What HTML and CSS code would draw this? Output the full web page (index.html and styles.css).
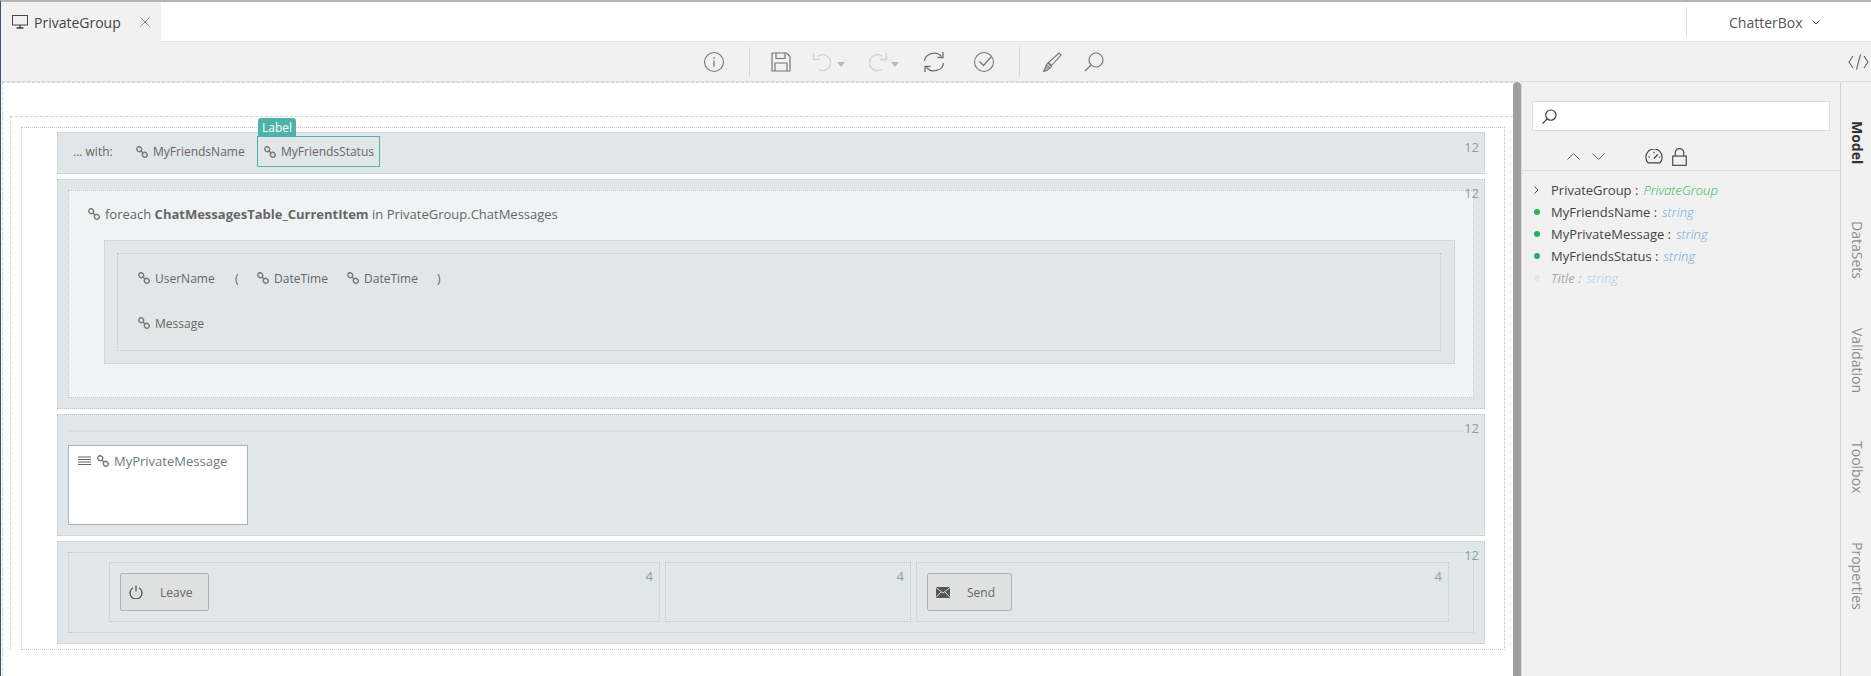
FILE: index.html
```html
<!DOCTYPE html>
<html lang="en">
<head>
<meta charset="utf-8">
<title>PrivateGroup</title>
<link rel="stylesheet" href="styles.css">
</head>
<body>
<svg class="defs" width="0" height="0">
  <defs>
    <symbol id="link" viewBox="0 0 12 12">
      <g fill="none" stroke="#7a7a7a" stroke-width="1.4">
        <ellipse cx="3.2" cy="3.2" rx="2.5" ry="2.3" transform="rotate(45 3.2 3.2)"/>
        <ellipse cx="8.8" cy="8.8" rx="2.5" ry="2.3" transform="rotate(45 8.8 8.8)"/>
        <path d="M5 5l2 2"/>
      </g>
    </symbol>
  </defs>
</svg>
<div class="app">
  <header class="tabbar">
    <div class="tab">
      <svg class="tab-icon" viewBox="0 0 16 14" fill="none" stroke="#444" stroke-width="1"><rect x="0.5" y="0.5" width="15" height="9.5"/><path d="M8 10v2.5M4.5 13h7" stroke-width="1.4"/></svg>
      <span class="tab-title">PrivateGroup</span>
      <svg class="tab-close" viewBox="0 0 10 10" fill="none" stroke="#8a8a8a" stroke-width="1"><path d="M0.5 0.5l9 9M9.5 0.5l-9 9"/></svg>
    </div>
    <div class="project">
      <span>ChatterBox</span>
      <svg class="project-caret" viewBox="0 0 8 5" fill="none" stroke="#555" stroke-width="1"><path d="M0.5 0.5l3.5 3.5 3.5-3.5"/></svg>
    </div>
  </header>

  <nav class="toolbar">
    <svg class="tool t-info" viewBox="0 0 22 22" fill="none" stroke="#777" stroke-width="1.1"><circle cx="11" cy="11" r="9.500"/><path d="M11 9.500v6" stroke-width="1.3"/><path d="M11 6.200v1.600" stroke-width="1.3"/></svg>
    <i class="tool-sep s-1"></i>
    <svg class="tool t-save" viewBox="0 0 20 20" fill="none" stroke="#777" stroke-width="1.2"><path d="M1 1h14.500l3.500 3.500v14.500h-18z"/><path d="M5 1v5.500h9v-5.500M4 19v-8h12v8"/></svg>
    <svg class="tool t-undo" viewBox="0 0 22 22" fill="none" stroke="#d2d2d2" stroke-width="1.3"><path d="M5.500 5.500a8 8 0 1 1 1 13"/><path d="M1.500 2v6.500h6.500"/></svg>
    <i class="caret"></i>
    <svg class="tool t-redo" viewBox="0 0 22 22" fill="none" stroke="#d2d2d2" stroke-width="1.3"><path d="M16.500 5.500a8 8 0 1 0 -1 13"/><path d="M20.500 2v6.500h-6.500"/></svg>
    <i class="caret"></i>
    <svg class="tool t-sync" viewBox="0 0 22 22" fill="none" stroke="#707070" stroke-width="1.3"><path d="M1.500 10a9.500 8.500 0 0 1 17-4.500"/><path d="M20 1v5.500h-5.500"/><path d="M20.500 12a9.500 8.500 0 0 1 -17 4.500"/><path d="M2 21v-5.500h5.500"/></svg>
    <svg class="tool t-check" viewBox="0 0 22 22" fill="none" stroke="#777" stroke-width="1.1"><circle cx="11" cy="11" r="9.500"/><path d="M6.500 10.500l4 4 8-9" stroke-width="1.3"/></svg>
    <i class="tool-sep s-2"></i>
    <svg class="tool t-brush" viewBox="0 0 20 20" fill="none" stroke="#777" stroke-width="1.1"><path d="M17 1l2 2-9.500 10.500-3-3z"/><path d="M6 11l3.500 3.500-1.500 1.500-3.500-3.500z"/><path d="M4.500 12.500c-.5 2-1.500 4-3 7 2.500-.5 5-1.500 6.500-3.500" fill="#aaa"/></svg>
    <svg class="tool t-search" viewBox="0 0 20 20" fill="none" stroke="#777" stroke-width="1.2"><circle cx="12" cy="8" r="7"/><path d="M7 13l-6 6"/></svg>
    <svg class="tool-code" viewBox="0 0 21 16" fill="none" stroke="#666" stroke-width="1.1"><path d="M5 2l-4 6 4 6M16 2l4 6-4 6M12.500 0.500l-4 15"/></svg>
  </nav>

  <main class="workspace">
    <section class="canvas">
      <div class="frame-a">
        <div class="frame-b">
          <div class="frame-c">
            <div class="row row-head">
              <span class="num">12</span>
              <span class="with">... with:</span>
              <span class="bind b-name"><svg class="lnk"><use href="#link"/></svg>MyFriendsName</span>
              <span class="bind b-sel">
                <span class="tag">Label</span>
                <svg class="lnk"><use href="#link"/></svg>MyFriendsStatus
              </span>
            </div>

            <div class="row row-loop">
              <span class="num">12</span>
              <div class="loop">
                <div class="loop-title"><svg class="lnk"><use href="#link"/></svg><span>foreach <b>ChatMessagesTable_CurrentItem</b> in PrivateGroup.ChatMessages</span></div>
                <div class="nest">
                  <div class="nest-in">
                    <div class="msg-line">
                      <span class="bind w-user"><svg class="lnk"><use href="#link"/></svg>UserName</span>
                      <span class="paren-l">(</span>
                      <span class="bind w-date"><svg class="lnk"><use href="#link"/></svg>DateTime</span>
                      <span class="bind w-date"><svg class="lnk"><use href="#link"/></svg>DateTime</span>
                      <span>)</span>
                    </div>
                    <div class="msg-line line-2">
                      <span class="bind"><svg class="lnk"><use href="#link"/></svg>Message</span>
                    </div>
                  </div>
                </div>
              </div>
            </div>

            <div class="row row-input">
              <span class="num">12</span>
              <div class="rule"></div>
              <div class="textarea">
                <svg class="lines" viewBox="0 0 13 10"><path d="M0 1h13M0 3.500h13M0 6h13M0 8.500h13" stroke="#666" stroke-width="1.2"/></svg>
                <svg class="lnk"><use href="#link"/></svg>
                <span>MyPrivateMessage</span>
              </div>
            </div>

            <div class="row row-actions">
              <span class="num">12</span>
              <div class="actions">
                <div class="col col-1">
                  <span class="num n4">4</span>
                  <button class="btn btn-leave">
                    <svg class="btn-icon" viewBox="0 0 14 14" fill="none" stroke="#555" stroke-width="1.3"><path d="M4 2.800a6 6 0 1 0 6 0"/><path d="M7 0.500v6"/></svg>
                    <span>Leave</span>
                  </button>
                </div>
                <div class="col col-2"><span class="num n4">4</span></div>
                <div class="col col-3">
                  <span class="num n4">4</span>
                  <button class="btn btn-send">
                    <svg class="btn-icon mail" viewBox="0 0 14 11"><rect width="14" height="11" fill="#555"/><path d="M0 .5l7 5.500 7-5.500M0 10.500l5-5.500M14 10.500l-5-5.500" stroke="#e6eaec" fill="none" stroke-width="0.9"/></svg>
                    <span>Send</span>
                  </button>
                </div>
              </div>
            </div>
          </div>
        </div>
      </div>
    </section>
    <div class="scrollbar"></div>

    <aside class="panel">
      <div class="search">
        <svg class="search-icon" viewBox="0 0 16 16" fill="none" stroke="#333" stroke-width="1.2"><circle cx="9.500" cy="6.500" r="5.500"/><path d="M5.500 10.500l-5 5"/></svg>
      </div>
      <div class="panel-tools">
        <svg class="pt-up" viewBox="0 0 13 7" fill="none" stroke="#666"><path d="M0.500 6.500l6-6 6 6"/></svg>
        <svg class="pt-down" viewBox="0 0 13 7" fill="none" stroke="#666"><path d="M0.500 0.500l6 6 6-6"/></svg>
        <svg class="pt-gauge" viewBox="0 0 17 14" fill="none" stroke="#444" stroke-width="1.1"><path d="M3 13a7.700 7.700 0 1 1 11 0z"/><path d="M8.500 9l3.500-4" stroke-width="1.4"/><path d="M3 7.500h1.500M8.500 2.500v1.500M13 7.500h1.500"/></svg>
        <svg class="pt-lock" viewBox="0 0 14 17" fill="none" stroke="#555" stroke-width="1.2"><rect x="0.600" y="7.600" width="12.800" height="8.800"/><path d="M3 7.500v-3a4 4 0 0 1 8 0v3"/></svg>
      </div>
      <ul class="tree">
        <li><svg class="tree-caret" viewBox="0 0 5 8" fill="none" stroke="#555"><path d="M0.500 0.500l3.500 3.500-3.500 3.500"/></svg><span class="tname">PrivateGroup :</span><em class="tgreen">PrivateGroup</em></li>
        <li><i class="dot"></i><span class="tname">MyFriendsName :</span><em>string</em></li>
        <li><i class="dot"></i><span class="tname">MyPrivateMessage :</span><em>string</em></li>
        <li><i class="dot"></i><span class="tname">MyFriendsStatus :</span><em>string</em></li>
        <li class="muted"><i class="dot"></i><span class="tname">Title :</span><em>string</em></li>
      </ul>
    </aside>

    <div class="sidetabs">
      <span class="stab active s-model">Model</span>
      <span class="stab s-data">DataSets</span>
      <span class="stab s-valid">Validation</span>
      <span class="stab s-tool">Toolbox</span>
      <span class="stab s-prop">Properties</span>
    </div>
  </main>
</div>
</body>
</html>
```
FILE: styles.css
```css
* { box-sizing: border-box; }
html, body { margin: 0; padding: 0; height: 100%; background: #fff; overflow: hidden; }
body { font-family: "Open Sans", "Liberation Sans", sans-serif; font-size: 12px; color: #666; }
.defs { position: absolute; }
svg { display: block; flex: none; }

.app { width: 1871px; height: 676px; display: flex; flex-direction: column; border-top: 2px solid #b4b4b4; border-left: 1px solid #3f5468; overflow: hidden; }

.tabbar { height: 40px; display: flex; justify-content: space-between; background: #fff; border-bottom: 1px solid #e2e2e2; flex: none; }
.tab { width: 160px; background: #f1f1f1; display: flex; align-items: center; padding-left: 11px; height: 40px; }
.tab-icon { width: 16px; height: 14px; margin-right: 6px; }
.tab-title { font-size: 14px; color: #444; width: 106px; }
.tab-close { width: 10px; height: 10px; }
.project { width: 185px; margin-top: 5px; height: 30px; border-left: 1px solid #e2e2e2; display: flex; align-items: center; padding-left: 42px; font-size: 14px; color: #555; }
.project-caret { width: 8px; height: 5px; margin-left: 9px; }

.toolbar { height: 40px; flex: none; background: #f1f1f1; border-bottom: 1px solid #dcdcdc; display: flex; align-items: center; padding-left: 702px; }
.tool { flex: none; }
.t-info { width: 22px; height: 22px; }
.tool-sep { width: 1px; height: 30px; background: #d8d8d8; display: block; flex: none; }
.s-1 { margin-left: 24px; }
.t-save { width: 20px; height: 20px; margin-left: 21px; }
.t-undo { width: 22px; height: 22px; margin-left: 21px; }
.caret { width: 0; height: 0; border-left: 4.5px solid transparent; border-right: 4.5px solid transparent; border-top: 5px solid #b9b9b9; margin: 6px 0 0 3px; flex: none; }
.t-redo { width: 22px; height: 22px; margin-left: 21px; }
.t-sync { width: 22px; height: 22px; margin-left: 24px; }
.t-check { width: 22px; height: 22px; margin-left: 28px; }
.s-2 { margin-left: 24px; }
.t-brush { width: 20px; height: 20px; margin-left: 22px; }
.t-search { width: 20px; height: 20px; margin-left: 22px; }
.tool-code { width: 21px; height: 16px; margin-left: auto; margin-right: 2px; }

.workspace { flex: 1; display: flex; min-height: 0; }

.canvas { width: 1512px; padding-left: 1px; overflow: hidden; background: #fff; }
.frame-a { border-top: 1px dashed #ccd4d8; border-left: 1px dashed #ccd4d8; padding: 33px 0 0 7px; height: 100%; }
.frame-b { width: 1503px; border-top: 1px dashed #ccd4d8; border-left: 1px dashed #ccd4d8; padding: 10px 0 0 10px; }
.frame-c { width: 1484px; height: 523px; border: 1px dotted #bcc8cc; padding: 4px 0 0 35px; }

.row { position: relative; width: 1428px; background: #e1e6e8; border: 1px dotted #bcc8cc; }
.num { position: absolute; right: 5px; top: 4px; font-size: 13px; line-height: 18px; color: #85a0b0; }

.row-head { height: 42px; display: flex; align-items: center; padding: 0 0 3px 15px; }
.row-head .num { top: 5px; }
.with { width: 62px; }
.bind { display: inline-flex; align-items: center; }
.lnk { width: 12px; height: 12px; margin-right: 5px; }
.b-name { width: 121px; margin-left: 1px; }
.b-sel { position: relative; width: 123px; height: 31px; border: 1px solid #4fb3a9; padding-left: 6px; }
.tag { position: absolute; left: 0; top: -19px; width: 38px; height: 19px; background: #4db3a8; color: #fff; border-radius: 3px 3px 0 0; font-size: 12px; line-height: 20px; text-align: center; }

.row-loop { margin-top: 5px; height: 230px; padding: 10px 10px 0; }
.loop { height: 208px; background: #eff3f4; border: 1px dotted #bcc8cc; padding: 13px 0 0 19px; font-size: 13px; }
.loop-title { display: flex; align-items: center; height: 20px; }
.loop-title b { font-weight: 700; }
.nest { margin: 16px 0 0 16px; width: 1351px; height: 124px; background: #e1e6e8; border: 1px dotted #bcc8cc; padding: 12px 13px 12px 12px; font-size: 12px; }
.nest-in { height: 98px; border: 1px dotted #bcc8cc; padding-left: 20px; }
.msg-line { display: flex; align-items: center; height: 20px; margin-top: 14px; }
.line-2 { margin-top: 25px; }
.w-user { width: 97px; }
.paren-l { width: 22px; }
.w-date { width: 90px; }

.row-input { margin-top: 5px; height: 122px; padding: 15px 10px 0; }
.rule { height: 2px; background: #d7dcdf; width: 1396px; }
.textarea { margin-top: 13px; width: 180px; height: 80px; background: #fff; border: 1px solid #a5b5c0; display: flex; align-items: flex-start; padding: 6px 0 0 9px; color: #6c7a86; font-size: 13px; }
.lines { width: 13px; height: 10px; margin: 4px 6px 0 0; }
.textarea .lnk { margin: 3px 5px 0 0; }
.textarea span { line-height: 18px; }

.row-actions { margin-top: 5px; height: 103px; padding: 10px; }
.actions { height: 81px; border: 1px dotted #bcc8cc; display: flex; gap: 5px; padding: 9px 0 0 40px; }
.col { position: relative; height: 60px; border: 1px dotted #bcc8cc; padding: 10px; }
.col-1 { width: 551px; }
.col-2 { width: 246px; }
.col-3 { width: 533px; }
.n4 { right: 6px; }
.btn { display: flex; align-items: center; height: 38px; background: #dfe1e0; border: 1px solid #a5b5c0; border-radius: 2px; padding: 0 0 0 8px; font-family: inherit; font-size: 12px; color: #666; }
.btn-leave { width: 89px; }
.btn-send { width: 85px; }
.btn-icon { width: 14px; height: 14px; margin-right: 17px; }
.mail { height: 11px; }

.scrollbar { width: 8px; flex: none; background: #9f9f9f; border-radius: 4px 4px 0 0; }

.panel { width: 319px; flex: none; background: #f1f1f1; border-left: 1px solid #dcdcdc; }
.search { margin: 19px 0 0 10px; width: 298px; height: 30px; background: #fff; border: 1px solid #dedede; display: flex; align-items: center; padding-left: 9px; }
.search-icon { width: 15px; height: 15px; }
.panel-tools { height: 40px; border-bottom: 1px solid #dcdcdc; display: flex; align-items: center; padding: 12px 0 0 45px; }
.pt-up, .pt-down { width: 13px; height: 7px; }
.pt-down { margin-left: 12px; }
.pt-gauge { width: 18px; height: 15px; margin-left: 40px; }
.pt-lock { width: 15px; height: 18px; margin-left: 9px; }
.tree { list-style: none; margin: 8px 0 0; padding: 0 0 0 12px; font-size: 13px; color: #444; }
.tree li { display: flex; align-items: center; height: 22px; }
.tree em { margin-left: 5px; color: #64a8e8; font-style: italic; font-weight: 300; }
.tree em.tgreen { color: #2fb45a; }
.tree-caret { width: 5px; height: 8px; margin-right: 12px; }
.dot { width: 6px; height: 6px; border-radius: 50%; background: #1fb45a; margin-right: 11px; flex: none; }
.muted .dot { background: #e4e4e4; }
.muted .tname { color: #a8a8a8; font-style: italic; }
.muted em { color: #a9cdee; }

.sidetabs { flex: 1; border-left: 1px solid #d2d2d2; background: #f1f1f1; display: flex; flex-direction: column; padding: 39px 0 0 2px; }
.stab { writing-mode: vertical-rl; font-size: 14px; color: #8d8d8d; line-height: 28px; width: 28px; white-space: nowrap; }
.stab.active { color: #333; font-weight: 700; }
.s-model { height: 100px; }
.s-data { height: 107px; }
.s-valid { height: 113px; }
.s-tool { height: 101px; }
```
